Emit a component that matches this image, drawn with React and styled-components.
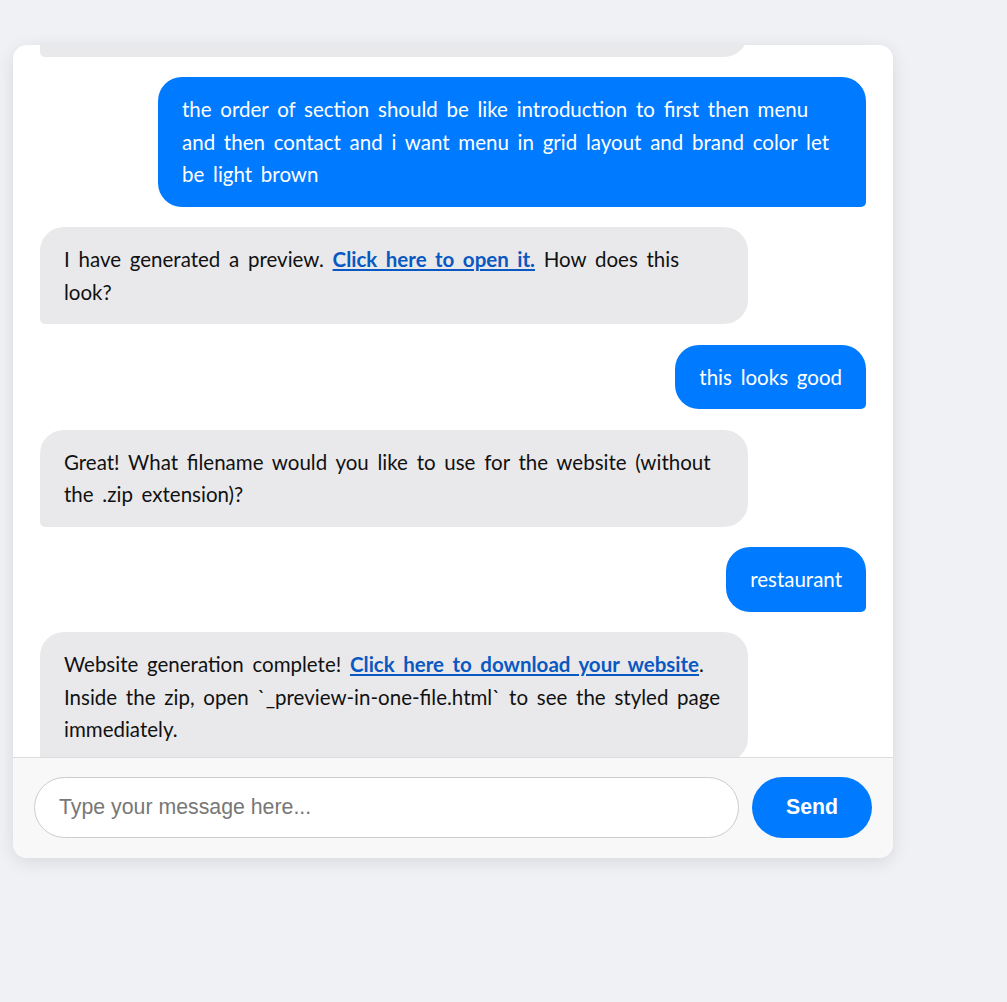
import React from "react";
import styled, { createGlobalStyle } from "styled-components";

const Global = createGlobalStyle`
  html, body { margin: 0; padding: 0; background: #f0f1f5; }
  body { font-family: "Lato", "Segoe UI", sans-serif; }
  * { box-sizing: border-box; }
`;

const Page = styled.div`
  padding: 45px 0 0 13px;
  min-height: 1002px;
`;

const ChatBox = styled.div`
  width: 880px;
  height: 813px;
  background: #ffffff;
  border-radius: 14px;
  box-shadow: 0 4px 18px rgba(0, 0, 0, 0.1);
  display: flex;
  flex-direction: column;
  overflow: hidden;
`;

const Messages = styled.div`
  flex: 1;
  min-height: 0;
  overflow: hidden;
  display: flex;
  flex-direction: column;
  justify-content: flex-end;
  gap: 20.5px;
  padding: 0 27px;
`;

const Bubble = styled.div`
  max-width: 708px;
  padding: 16px 24px;
  font-family: "Lato", "Segoe UI", sans-serif;
  font-size: 20.5px;
  word-spacing: 3.5px;
  line-height: 32.5px;
  border-radius: 24px;
  flex-shrink: 0;
  ${(p) =>
    p.$user
      ? `
    align-self: flex-end;
    background: #007bff;
    color: #ffffff;
    border-bottom-right-radius: 5px;
  `
      : `
    align-self: flex-start;
    background: #e9e9eb;
    color: #111111;
    border-bottom-left-radius: 5px;
  `}
  &:last-child {
    margin-bottom: -4.5px;
  }
`;

const Link = styled.a`
  color: #0a58c2;
  font-weight: 700;
  text-decoration: underline;
`;

const InputBar = styled.div`
  border-top: 1px solid #dcdcdc;
  background: #f8f8f8;
  padding: 19px 21px 20px 21px;
  display: flex;
  align-items: center;
  gap: 13px;
`;

const TextInput = styled.input`
  flex: 1;
  height: 61px;
  border: 1px solid #cccccc;
  border-radius: 31px;
  padding: 0 24px;
  font-family: "Liberation Sans", Arial, sans-serif;
  font-size: 21.3px;
  background: #ffffff;
  outline: none;
  &::placeholder { color: #777777; }
`;

const SendButton = styled.button`
  width: 120px;
  height: 61px;
  border: none;
  border-radius: 31px;
  background: #007bff;
  color: #ffffff;
  font-family: "Liberation Sans", Arial, sans-serif;
  font-weight: 700;
  font-size: 21.3px;
  cursor: pointer;
`;

export default function App() {
  return (
    <>
      <Global />
      <Page>
        <ChatBox>
          <Messages>
            <Bubble>
              Great! Please tell me what changes you would like to make to the
              layout, sections or colours of the website.
            </Bubble>
            <Bubble $user>
              the order of section should be like introduction to first then menu
              and then contact and i want menu in grid layout and brand color let
              be light brown
            </Bubble>
            <Bubble>
              I have generated a preview. <Link href="#">Click here to open it.</Link>{" "}
              How does this look?
            </Bubble>
            <Bubble $user>this looks good</Bubble>
            <Bubble>
              Great! What filename would you like to use for the website (without
              the .zip extension)?
            </Bubble>
            <Bubble $user>restaurant</Bubble>
            <Bubble>
              Website generation complete!{" "}
              <Link href="#">Click here to download your website</Link>. Inside the
              zip, open `_preview-in-one-file.html` to see the styled page
              immediately.
            </Bubble>
          </Messages>
          <InputBar>
            <TextInput placeholder="Type your message here..." />
            <SendButton>Send</SendButton>
          </InputBar>
        </ChatBox>
      </Page>
    </>
  );
}
